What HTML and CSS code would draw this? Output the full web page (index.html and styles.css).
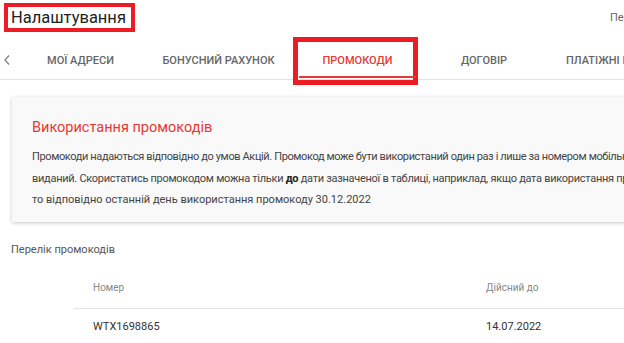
FILE: index.html
```html
<!DOCTYPE html>
<html lang="uk">
<head>
<meta charset="utf-8">
<title>Налаштування</title>
<link rel="stylesheet" href="styles.css">
</head>
<body>
<div class="page">
  <header class="topbar">
    <h1 class="title">Налаштування</h1>
    <span class="topbar-link">Персональні дані</span>
  </header>

  <nav class="tabs">
    <span class="tabs-prev">
      <svg width="8" height="12" viewBox="0 0 8 12"><path d="M6 1.5 L2 6 L6 10.5" fill="none" stroke="#888" stroke-width="1.4"/></svg>
    </span>
    <a class="tab tab-w1">МОЇ АДРЕСИ</a>
    <a class="tab tab-w2">БОНУСНИЙ РАХУНОК</a>
    <a class="tab tab-w3 tab-active">ПРОМОКОДИ<span class="mark-tab"></span></a>
    <a class="tab tab-w4">ДОГОВІР</a>
    <a class="tab tab-w5">ПЛАТІЖНІ КАРТКИ</a>
  </nav>

  <section class="card">
    <h2 class="card-title">Використання промокодів</h2>
    <p class="card-text"><span class="line line-1">Промокоди надаються відповідно до умов Акцій. Промокод може бути використаний один раз і лише за номером мобільного телефону, на який він був</span><span class="line line-2">виданий. Скористатись промокодом можна тільки <b>до</b> дати зазначеної в таблиці, наприклад, якщо дата використання промокоду 31.12.2022,</span><span class="line">то відповідно останній день використання промокоду 30.12.2022</span></p>
  </section>

  <h3 class="list-title">Перелік промокодів</h3>

  <div class="table">
    <div class="row row-head">
      <span class="cell cell-code">Номер</span>
      <span class="cell cell-date">Дійсний до</span>
    </div>
    <div class="row">
      <span class="cell cell-code">WTX1698865</span>
      <span class="cell cell-date">14.07.2022</span>
    </div>
  </div>
</div>
</body>
</html>
```

FILE: styles.css
```css
html, body {
  margin: 0;
  padding: 0;
  background: #fff;
}
body {
  font-family: Roboto, "Noto Sans", "Liberation Sans", sans-serif;
  color: #333;
  width: 624px;
  height: 343px;
  overflow: hidden;
}
.page {
  width: 940px;
}
.topbar {
  display: flex;
  align-items: flex-start;
  height: 40px;
}
.title {
  margin: 3px 0 0 4px;
  border: 4px solid #ed1c24;
  padding: 0 5px 0 3px;
  font-size: 16.5px;
  font-weight: 400;
  line-height: 21px;
  color: #222;
  white-space: nowrap;
}
.topbar-link {
  margin: 11px 0 0 475px;
  font-size: 11px;
  line-height: 13px;
  color: #666;
  white-space: nowrap;
}
.tabs {
  display: flex;
  align-items: stretch;
  height: 39px;
  border-bottom: 1px solid #e3e3e3;
}
.tabs-prev {
  width: 23px;
  display: flex;
  align-items: center;
  padding-left: 3px;
  box-sizing: border-box;
}
.tab {
  position: relative;
  display: flex;
  align-items: center;
  justify-content: center;
  padding-top: 2px;
  box-sizing: border-box;
  font-size: 11px;
  font-weight: 500;
  color: #666;
  white-space: nowrap;
}
.tab-w1 { width: 115px; }
.tab-w2 { width: 161px; }
.tab-w3 { width: 117px; }
.tab-w4 { width: 136px; }
.tab-w5 { justify-content: flex-start; padding-left: 14px; }
.tab-active {
  color: #e53935;
}
.tab-active::after {
  content: "";
  position: absolute;
  left: 0;
  right: 0;
  bottom: 1px;
  height: 2px;
  background: #e53935;
}
.mark-tab {
  position: absolute;
  top: -3px;
  bottom: -6px;
  left: -6px;
  right: -2px;
  border: 5px solid #ed1c24;
}
.card {
  margin: 17px 0 0 12px;
  background: #f9f9f9;
  box-shadow: 0 1px 4px rgba(0, 0, 0, 0.22);
  padding: 21px 20px 11px 20px;
}
.card-title {
  margin: 0;
  font-size: 14.5px;
  line-height: 20px;
  font-weight: 400;
  color: #e53935;
}
.card-text {
  margin: 8px 0 0 0;
  font-size: 11px;
  line-height: 21.5px;
  color: #444;
  white-space: nowrap;
}
.line {
  display: block;
}
.line-1 {
  letter-spacing: -0.38px;
}
.line-2 {
  letter-spacing: -0.28px;
}
.card-text b {
  font-weight: 700;
  color: #222;
}
.list-title {
  margin: 20px 0 0 11px;
  font-size: 11px;
  line-height: 16px;
  font-weight: 400;
  color: #555;
}
.table {
  margin: 9px 0 0 74px;
}
.row {
  display: flex;
  height: 36px;
  align-items: center;
}
.row-head {
  height: 41px;
  border-bottom: 1px solid #e3e3e3;
}
.cell {
  font-size: 11px;
  color: #333;
}
.cell-code {
  padding-left: 19px;
  width: 393px;
}
.row-head .cell {
  font-size: 10px;
  color: #888;
}
```
